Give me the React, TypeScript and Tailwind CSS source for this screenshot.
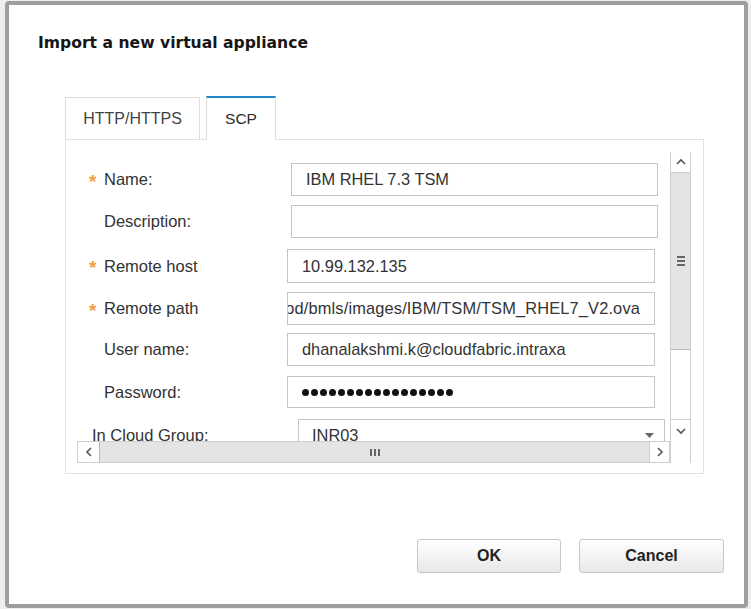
import React from "react";

const Chevron = ({ dir }: { dir: "up" | "down" | "left" | "right" }) => {
  // small thin arrow used by the scrollbar buttons
  const pts = {
    up: "1,6 5,2 9,6",
    down: "1,2 5,6 9,2",
    left: "6,1 2,5 6,9",
    right: "2,1 6,5 2,9",
  }[dir];
  const vertical = dir === "up" || dir === "down";
  return (
    <svg width={vertical ? 10 : 8} height={vertical ? 8 : 10} viewBox={vertical ? "0 0 10 8" : "0 0 8 10"}>
      <polyline points={pts} fill="none" stroke="#555" strokeWidth="1.6" />
    </svg>
  );
};

const Field = ({
  req,
  label,
  rowClass,
  labelClass,
  inputClass,
  children,
}: {
  req?: boolean;
  label: string;
  rowClass: string;
  labelClass: string;
  inputClass: string;
  children?: React.ReactNode;
}) => (
  <div className={`flex items-center pl-[12px] ${rowClass}`}>
    <span className="w-[15px] self-start mt-[9px] text-[19px] leading-[19px] font-bold text-[#f4a040]">{req ? "*" : ""}</span>
    <span className={`text-[16.5px] text-[#333] ${labelClass}`}>{label}</span>
    <div className={`border border-[#c4c4c4] bg-white flex items-center text-[16.4px] text-[#333] whitespace-nowrap overflow-hidden ${inputClass}`}>
      {children}
    </div>
  </div>
);

export default function App() {
  return (
    <div className="w-[751px] h-[609px] bg-[#eeeeee] pt-[1px] pl-[5px] font-['Liberation_Sans',Arial,sans-serif]">
      <div className="w-[743px] h-[607px] border-4 border-[#9e9e9e] rounded-[4px] bg-white flex flex-col">
        <h1 className="mt-[28px] pl-[29px] text-[15.6px] leading-[20px] font-bold font-['DejaVu_Sans',sans-serif] text-[#161616]">
          Import a new virtual appliance
        </h1>

        <div className="ml-[56px] mt-[43px] w-[639px]">
          {/* Tabs */}
          <div className="flex items-end gap-[6px] h-[43px]">
            <div className="w-[135px] h-[42px] border-t border-x border-[#dedede] flex items-center justify-center text-[16px] text-[#444]">
              HTTP/HTTPS
            </div>
            <div className="relative -mb-px w-[70px] h-[44px] border-t-2 border-t-[#1f86c8] border-x border-x-[#dedede] bg-white flex items-center justify-center text-[15.5px] text-[#2a2a2a]">
              SCP
            </div>
          </div>

          {/* Panel */}
          <div className="h-[335px] border border-[#e2e2e2] pt-[12px] pl-[11px]">
            <div className="grid grid-cols-[593px_21px] grid-rows-[289px_22px] w-[614px]">
              {/* form content */}
              <div className="overflow-hidden flex flex-col">
                <Field req label="Name:" rowClass="mt-[11px]" labelClass="w-[187px]" inputClass="w-[367px] h-[33px] px-[14px]">
                  IBM RHEL 7.3 TSM
                </Field>
                <Field label="Description:" rowClass="mt-[9px]" labelClass="w-[187px]" inputClass="w-[367px] h-[33px] px-[14px]" />
                <Field req label="Remote host" rowClass="mt-[11px]" labelClass="w-[183px]" inputClass="w-[368px] h-[34px] px-[14px]">
                  10.99.132.135
                </Field>
                <Field req label="Remote path" rowClass="mt-[9px]" labelClass="w-[183px]" inputClass="w-[368px] h-[33px] pr-[14px] justify-end">
                  <span className="shrink-0 tracking-[0.15px]">/gpfs/prod/bmls/images/IBM/TSM/TSM_RHEL7_V2.ova</span>
                </Field>
                <Field label="User name:" rowClass="mt-[8px]" labelClass="w-[183px]" inputClass="w-[368px] h-[33px] px-[14px]">
                  dhanalakshmi.k@cloudfabric.intraxa
                </Field>
                <Field label="Password:" rowClass="mt-[10px]" labelClass="w-[183px]" inputClass="w-[368px] h-[32px] px-[14px] gap-[2px]">
                  {Array.from({ length: 17 }).map((_, i) => (
                    <span key={i} className="w-[7px] h-[7px] rounded-full bg-[#111] shrink-0" />
                  ))}
                </Field>
                <div className="flex items-center pl-[15px] mt-[11px] shrink-0">
                  <span className="w-[206px] text-[16.5px] text-[#333]">In Cloud Group:</span>
                  <div className="w-[367px] h-[33px] border border-[#c4c4c4] flex items-center justify-between pl-[13px] pr-[10px] text-[16.4px] text-[#333]">
                    INR03
                    <svg width="9" height="5" viewBox="0 0 9 5">
                      <polygon points="0,0 9,0 4.5,5" fill="#666" />
                    </svg>
                  </div>
                </div>
              </div>

              {/* vertical scrollbar */}
              <div className="flex flex-col border-x border-[#cfcfcf] bg-white">
                <div className="h-[21px] border-b border-[#cfcfcf] flex items-center justify-center">
                  <Chevron dir="up" />
                </div>
                <div className="h-[177px] bg-[#e4e4e4] border-b border-[#b9b9b9] flex flex-col items-center justify-center gap-[2px]">
                  <span className="w-[8px] h-[2px] bg-[#666]" />
                  <span className="w-[8px] h-[2px] bg-[#666]" />
                  <span className="w-[8px] h-[2px] bg-[#666]" />
                </div>
                <div className="flex-1" />
                <div className="h-[22px] border-t border-[#cfcfcf] flex items-center justify-center">
                  <Chevron dir="down" />
                </div>
              </div>

              {/* horizontal scrollbar */}
              <div className="flex border border-[#cfcfcf] bg-white">
                <div className="w-[22px] flex items-center justify-center border-r border-[#b9b9b9]">
                  <Chevron dir="left" />
                </div>
                <div className="flex-1 bg-[#e4e4e4] flex items-center justify-center gap-[2px]">
                  <span className="w-[2px] h-[7px] bg-[#666]" />
                  <span className="w-[2px] h-[7px] bg-[#666]" />
                  <span className="w-[2px] h-[7px] bg-[#666]" />
                </div>
                <div className="w-[20px] flex items-center justify-center border-l border-[#cfcfcf]">
                  <Chevron dir="right" />
                </div>
              </div>

              {/* corner */}
              <div className="border-x border-[#cfcfcf] bg-white" />
            </div>
          </div>
        </div>

        {/* Buttons */}
        <div className="mt-[65px] flex justify-end gap-[18px] pr-[20px]">
          <button className="w-[144px] h-[34px] border border-[#c6c6c6] rounded-[3px] bg-linear-to-b from-white to-[#e8e8e8] text-[16px] font-bold text-[#222]">
            OK
          </button>
          <button className="w-[145px] h-[34px] border border-[#c6c6c6] rounded-[3px] bg-linear-to-b from-white to-[#e8e8e8] text-[16px] font-bold text-[#222]">
            Cancel
          </button>
        </div>
      </div>
    </div>
  );
}
